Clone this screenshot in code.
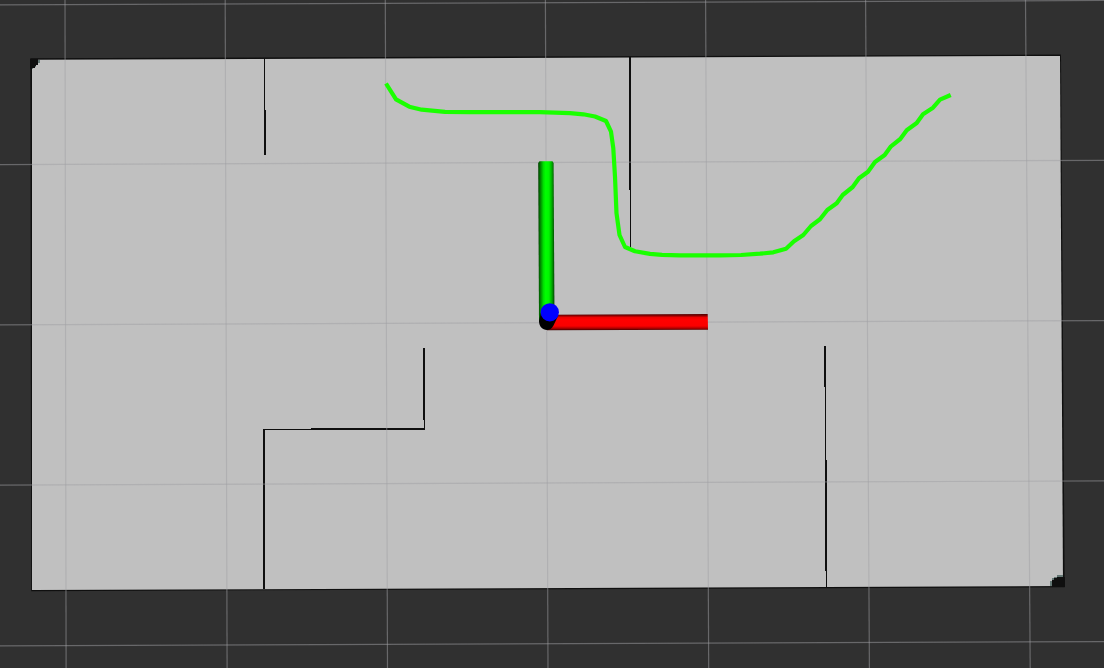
const verticals = [
  [65, 66.1], [225.2, 227.1], [385.3, 387.5], [545.4, 548], [705.6, 708.7], [865.6, 869.4], [1025.5, 1030.2],
];
const horizontals = [[4.8, 0.5], [164.6, 160.3], [324.8, 320.6], [485.1, 480.9], [645.8, 641.6]];

const route =
  "386,83.5 396,99.3 409.3,106.7 421.7,109.7 445,111.8 470,112.1 540,112.2 570,113.2 583.3,114.3 595,116.5 606,121 611,131.7 613.3,148.3 615,176.7 616.5,213.3 619.5,235 625,247 635,251.3 650,253.9 662,254.9 680,255.4 720,255.4 741,255 760,253.7 773.3,252.3 786,248.7 794,241.3 803.3,235 811,226 820,219.3 827.3,210 836.7,203.3 842.7,195 852.7,187 859,178.3 868,171.7 875,162 884.7,155 891,146.3 900.3,139 906.7,130.3 916.7,123 923,114.3 933,107.7 940,99.7 950.7,95";

function OccupancyMap() {
  return (
    <g>
      <polygon points="30.3,58.2 1061,54.6 1064.7,587.3 31.2,591.2" fill="#0f0f0f" />
      <polygon points="32,59.8 1060,55.9 1063,586 32,590" fill="#c0c0c0" />
      <g shapeRendering="crispEdges">
        <path d="M30 59H38V65H36V67H35V68H32V69H30Z" fill="#0f0f0f" />
        <path d="M38 60h2v3h-2z M35 66h1v1h-1z M32 68h1v1h-1z" fill="#647774" />
        <path d="M1050 586v-5h2v-3h2v-1h3v-2h6v2h-6v1h-3v2h-2v6z" fill="#647774" />
        <path d="M1052 586v-6h2v-2h3v-1h8v10h-13z" fill="#0f0f0f" />
        <g fill="#0f0f0f">
          <path d="M264 58h1v52h1v45h-2z" />
          <path d="M629 57h2v190h-1v-57h-1z" />
          <path d="M423 348h2v82H265v159h-2V429h48v-1h113v-8h-1z" />
          <path d="M824 346h2v114h1v127h-1v-16h-1V387h-1z" />
        </g>
      </g>
    </g>
  );
}

function Grid() {
  return (
    <g stroke="#a0a0a4" strokeOpacity="0.5" strokeWidth="1.2">
      {verticals.map(([top, bottom]) => (
        <line key={top} x1={top} y1="0" x2={bottom} y2="668" />
      ))}
      {horizontals.map(([left, right]) => (
        <line key={left} x1="0" y1={left} x2="1104" y2={right} />
      ))}
    </g>
  );
}

function Axes() {
  return (
    <g>
      <polygon points="538.2,163 539.5,161.3 552.5,161.3 553.6,163 554.5,322 539,322" fill="url(#greenAxis)" />
      <polygon points="547,314.7 707.7,313.9 708,329.7 547,330.2" fill="url(#redAxis)" />
      <path d="M539 321L541 312L558 316L553.5 325.5C552 328.5 549.5 330 546.8 330C542.5 330 539 326.5 539 321Z" fill="#000" />
      <circle cx="549.8" cy="312.3" r="9.1" fill="#00f" />
    </g>
  );
}

export default function App() {
  return (
    <main className="h-[668px] w-[1104px] overflow-hidden bg-[#303030]">
      <svg className="block h-full w-full" viewBox="0 0 1104 668">
        <defs>
          <linearGradient id="greenAxis">
            <stop offset="0" stopColor="#003c00" />
            <stop offset="0.14" stopColor="#008500" />
            <stop offset="0.32" stopColor="#00df00" />
            <stop offset="0.46" stopColor="#00ff00" />
            <stop offset="0.66" stopColor="#00f400" />
            <stop offset="0.85" stopColor="#00a400" />
            <stop offset="1" stopColor="#003c00" />
          </linearGradient>
          <linearGradient id="redAxis" x2="0" y2="1">
            <stop offset="0" stopColor="#480000" />
            <stop offset="0.1" stopColor="#850000" />
            <stop offset="0.22" stopColor="#ed0000" />
            <stop offset="0.36" stopColor="#ff0000" />
            <stop offset="0.74" stopColor="#fa0000" />
            <stop offset="0.88" stopColor="#b00000" />
            <stop offset="1" stopColor="#400000" />
          </linearGradient>
        </defs>
        <OccupancyMap />
        <Grid />
        <polyline points={route} fill="none" stroke="#1aff00" strokeWidth="4.2" strokeLinejoin="round" />
        <Axes />
      </svg>
    </main>
  );
}
